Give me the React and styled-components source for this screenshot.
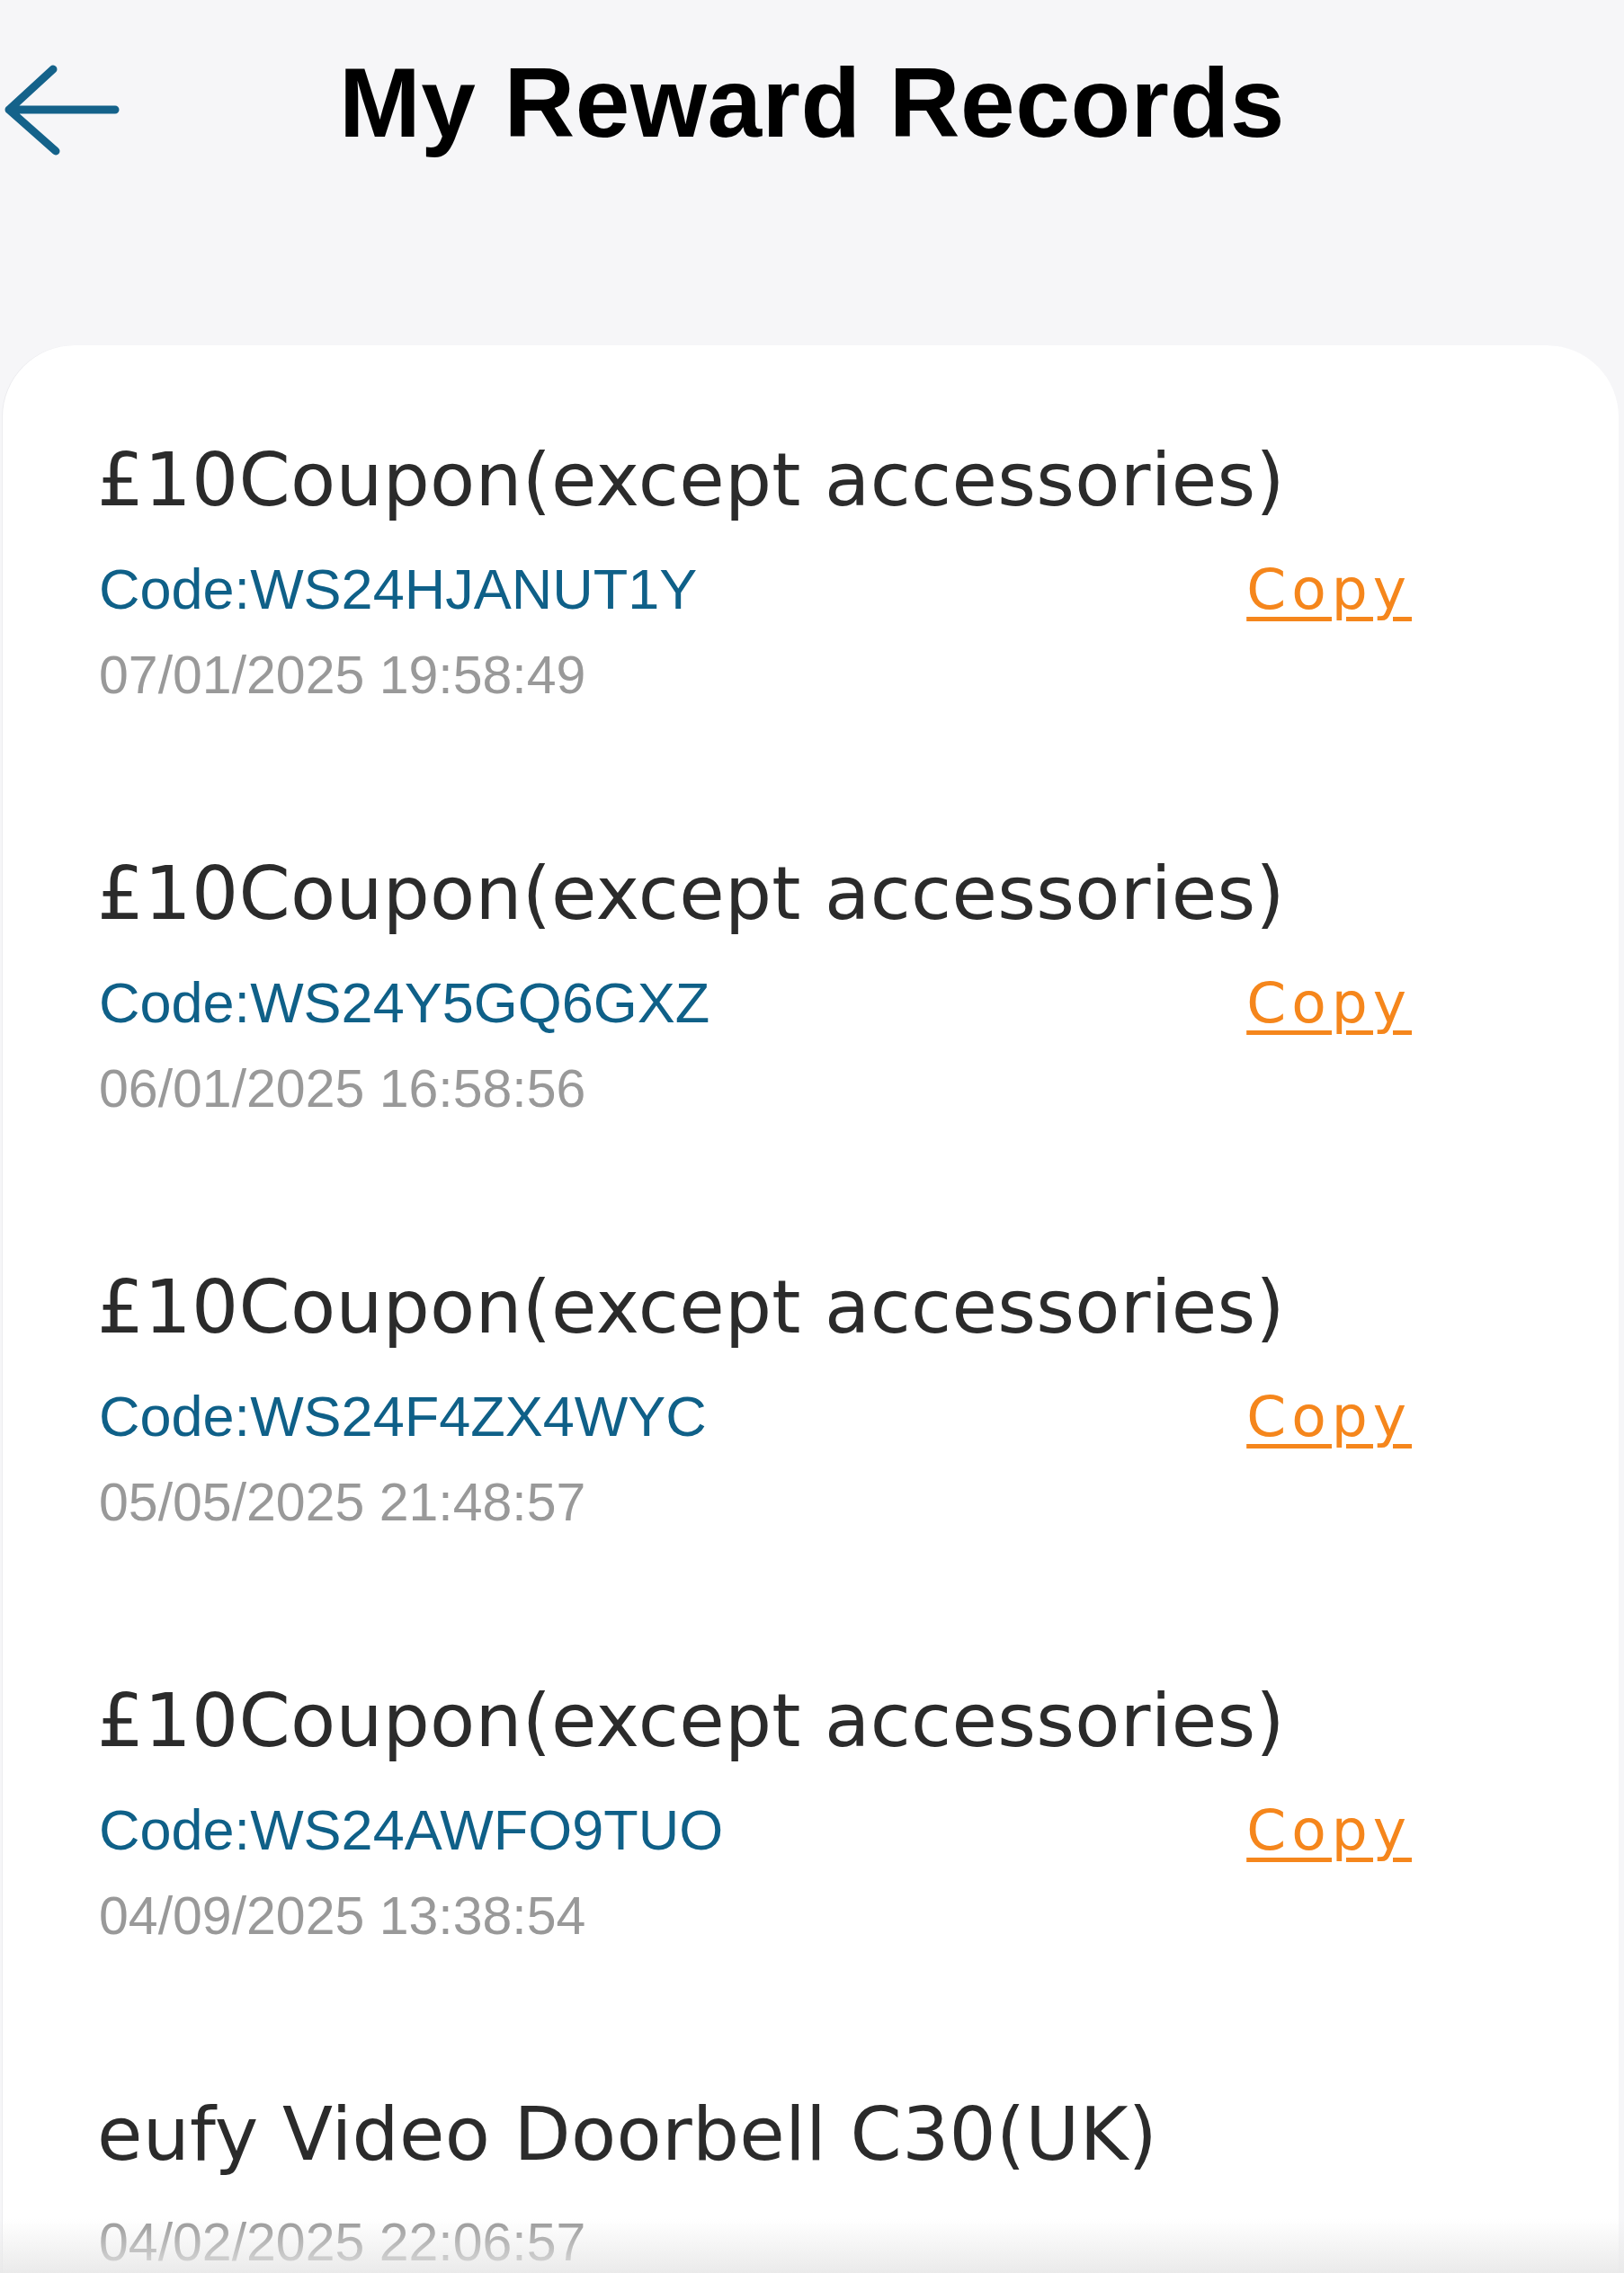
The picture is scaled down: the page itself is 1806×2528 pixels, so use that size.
import React from "react";
import styled, { createGlobalStyle } from "styled-components";

const GlobalStyle = createGlobalStyle`
    html, body {
        margin : 0;
        padding : 0;
        background : #f6f6f8;
    }
    #root {
        min-height : 2528px;
    }
`;

const Page = styled.div`
    position : relative;
    width : 1806px;
    height : 2528px;
    overflow : hidden;
    background : #f6f6f8;
    display : flex;
    flex-direction : column;
`;

const Header = styled.header`
    flex-shrink : 0;
    height : 384px;
    display : grid;
    grid-template-columns : 1fr auto 1fr;
    align-items : start;
`;

const BackButton = styled.button`
    margin : 68px 0 0 2px;
    padding : 0;
    width : 134px;
    height : 110px;
    border : none;
    background : none;
    cursor : pointer;
    justify-self : start;
`;

const Title = styled.h1`
    margin : 54px 0 0;
    font-family : "Liberation Sans", Arial, sans-serif;
    font-weight : 700;
    font-size : 109px;
    line-height : 120px;
    color : #000;
    letter-spacing : 0.6px;
`;

const Card = styled.main`
    flex : 1;
    margin : 0 6px 0 3px;
    padding : 102px 0 0 105px;
    background : #fff;
    border-radius : 80px 80px 0 0;
    box-shadow : -1px 0 0 #ececef;
`;

const Item = styled.section`
    margin-bottom : 163px;
`;

const ItemTitle = styled.h2`
    margin : 0;
    font-family : "DejaVu Sans", sans-serif;
    font-weight : 400;
    font-size : 82px;
    line-height : 96px;
    color : #2b2b2b;
    letter-spacing : 0.3px;
`;

const CodeRow = styled.div`
    margin-top : 38px;
    width : 1462px;
    display : flex;
    justify-content : space-between;
    align-items : baseline;
`;

const CodeText = styled.span`
    margin-left : 2px;
    font-family : "Liberation Sans", Arial, sans-serif;
    font-size : 63px;
    line-height : 70px;
    color : #0f6088;
`;

const CopyLink = styled.a`
    font-family : "DejaVu Sans", sans-serif;
    font-size : 63px;
    line-height : 70px;
    color : #f5861c;
    letter-spacing : 6px;
    text-decoration : underline;
    text-decoration-thickness : 5px;
    text-underline-offset : 9px;
    cursor : pointer;
`;

const DateText = styled.div`
    margin-top : ${(props) => props.$gap}px;
    margin-left : 2px;
    font-family : "Liberation Sans", Arial, sans-serif;
    font-size : 59px;
    line-height : 64px;
    color : #999999;
`;

const BottomFade = styled.div`
    position : absolute;
    left : 0;
    right : 0;
    bottom : 0;
    height : 60px;
    background : linear-gradient(to bottom, rgba(236, 236, 236, 0), rgba(232, 232, 232, 0.9));
    pointer-events : none;
`;

const records = [
    { title : "£10Coupon(except accessories)", code : "WS24HJANUT1Y", date : "07/01/2025 19:58:49" },
    { title : "£10Coupon(except accessories)", code : "WS24Y5GQ6GXZ", date : "06/01/2025 16:58:56" },
    { title : "£10Coupon(except accessories)", code : "WS24F4ZX4WYC", date : "05/05/2025 21:48:57" },
    { title : "£10Coupon(except accessories)", code : "WS24AWFO9TUO", date : "04/09/2025 13:38:54" },
    { title : "eufy Video Doorbell C30(UK)", code : null, date : "04/02/2025 22:06:57" },
];

function BackArrow() {
    return (
        <svg width = "134" height = "110" viewBox = "0 0 134 110">
            <path
                d = "M57 9 L8 54 L60 100 M8 54 L126 54"
                fill = "none"
                stroke = "#14628a"
                strokeWidth = "9"
                strokeLinecap = "round"
                strokeLinejoin = "round"
            />
        </svg>
    );
}

function App() {
    return (
        <Page>
            <GlobalStyle />
            <Header>
                <BackButton aria-label = "Back">
                    <BackArrow />
                </BackButton>
                <Title>My Reward Records</Title>
                <div />
            </Header>
            <Card>
                {records.map((item, index) => (
                    <Item key = {index}>
                        <ItemTitle>{item.title}</ItemTitle>
                        {item.code && (
                            <CodeRow>
                                <CodeText>Code:{item.code}</CodeText>
                                <CopyLink>Copy</CopyLink>
                            </CodeRow>
                        )}
                        <DateText $gap = {item.code ? 28 : 40}>{item.date}</DateText>
                    </Item>
                ))}
            </Card>
            <BottomFade />
        </Page>
    );
}

export default App;
